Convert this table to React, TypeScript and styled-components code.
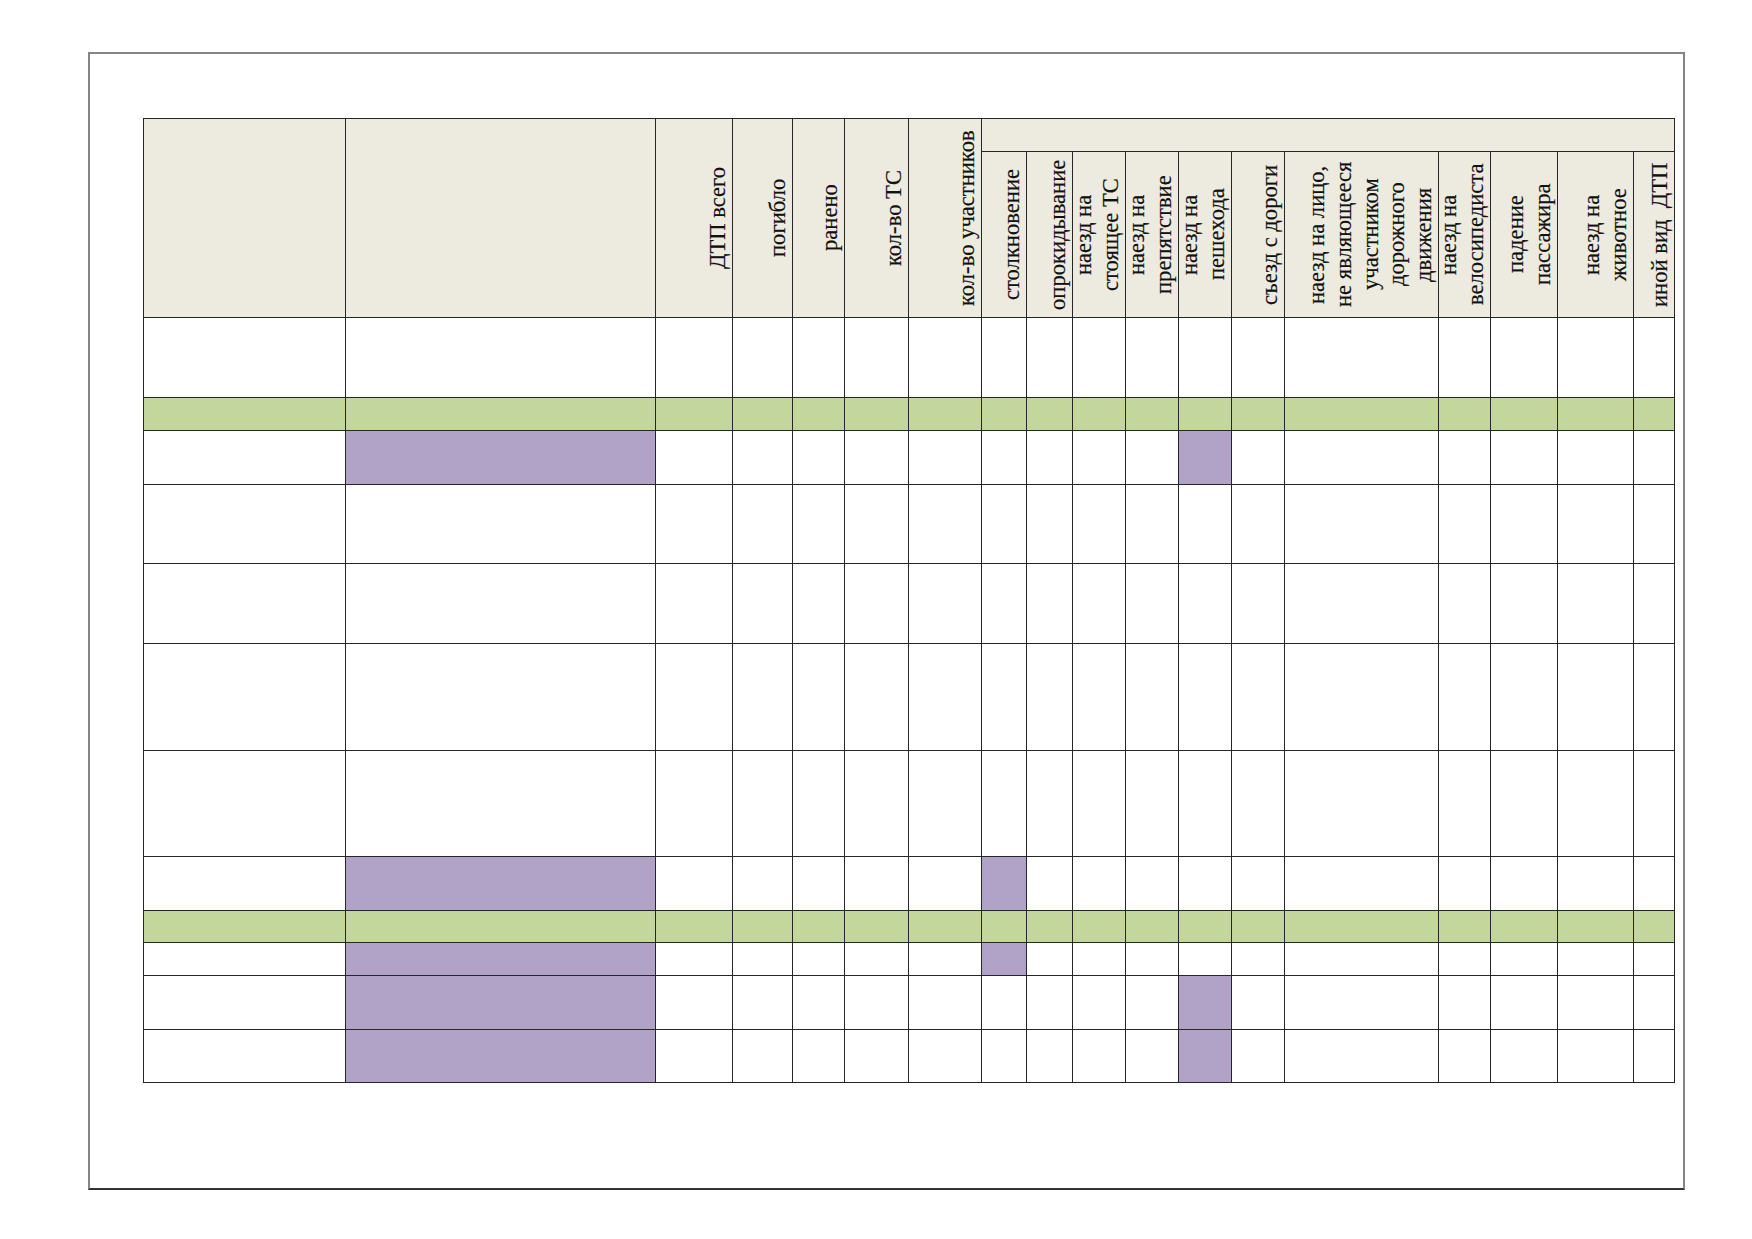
import React from "react";
import styled, { createGlobalStyle } from "styled-components";

const GlobalStyle = createGlobalStyle`
  html, body { margin: 0; padding: 0; background: #ffffff; }
  body { font-family: "Liberation Serif", "Times New Roman", serif; color: #111111; }
`;

type Tone = "head" | "white" | "green" | "purple";

const TONES: Record<Tone, string> = {
  head: "#EDEBE0",
  white: "#FFFFFF",
  green: "#C3D69B",
  purple: "#B1A2C7",
};

/* distances between vertical rules, left to right */
const COLS = [202, 310, 77, 60, 52, 64, 73, 45, 46, 53, 53, 53, 53, 154, 52, 67, 76, 41];

/* header: top band, rotated-label band */
const HEAD_ROWS = [33, 166];

interface BodyRow {
  h: number;
  green?: boolean;
  purple?: number[];
}

const BODY: BodyRow[] = [
  { h: 80 },
  { h: 33, green: true },
  { h: 54, purple: [1, 11] },
  { h: 79 },
  { h: 80 },
  { h: 107 },
  { h: 106 },
  { h: 54, purple: [1, 7] },
  { h: 32, green: true },
  { h: 33, purple: [1, 7] },
  { h: 54, purple: [1, 11] },
  { h: 53, purple: [1, 11] },
];

const MAIN_HEADS: string[][] = [
  [],
  [],
  ["ДТП всего"],
  ["погибло"],
  ["ранено"],
  ["кол-во ТС"],
  ["кол-во участников"],
];

const TYPE_HEADS: string[][] = [
  ["столкновение"],
  ["опрокидывание"],
  ["наезд на", "стоящее ТС"],
  ["наезд на", "препятствие"],
  ["наезд на", "пешехода"],
  ["съезд с дороги"],
  ["наезд на лицо,", "не являющееся", "участником", "дорожного", "движения"],
  ["наезд на", "велосипедиста"],
  ["падение", "пассажира"],
  ["наезд на", "животное"],
  ["иной вид\u00a0\u00a0ДТП"],
];

const Page = styled.div`
  box-sizing: border-box;
  min-height: 1239px;
  padding: 52px 0 0 88px;
`;

const Sheet = styled.div`
  box-sizing: border-box;
  width: 1597px;
  height: 1138px;
  border: 2px solid #848484;
  border-bottom-color: #333333;
  padding: 64px 0 0 53px;
`;

const Grid = styled.div<{ $cols: number[]; $rows: number[] }>`
  display: grid;
  width: max-content;
  grid-template-columns: ${(p) => p.$cols.map((w) => `${w - 1}px`).join(" ")};
  grid-template-rows: ${(p) => p.$rows.map((h) => `${h - 1}px`).join(" ")};
  gap: 1px;
  padding: 1px;
  background: #262626;
`;

const Cell = styled.div<{ $tone: Tone; $rowSpan?: number; $colSpan?: number }>`
  background: ${(p) => TONES[p.$tone]};
  grid-row: span ${(p) => p.$rowSpan ?? 1};
  grid-column: span ${(p) => p.$colSpan ?? 1};
  display: flex;
  justify-content: flex-end;
  align-items: stretch;
  min-width: 0;
  overflow: visible;
`;

const Label = styled.div`
  writing-mode: vertical-rl;
  transform: rotate(180deg);
  text-align: center;
  font-family: "Liberation Serif", "Times New Roman", serif;
  font-size: 22.6px;
  line-height: 26.8px;
  white-space: nowrap;
  color: #111111;
  -webkit-text-stroke: 0.2px #111111;
`;

function HeadLabel({ lines }: { lines: string[] }) {
  if (lines.length === 0) return null;
  return (
    <Label>
      {lines.map((l, i) => (
        <React.Fragment key={i}>
          {i > 0 && <br />}
          {l}
        </React.Fragment>
      ))}
    </Label>
  );
}

export default function App() {
  const rows = [...HEAD_ROWS, ...BODY.map((r) => r.h)];
  return (
    <Page>
      <GlobalStyle />
      <Sheet>
        <Grid $cols={COLS} $rows={rows}>
          {MAIN_HEADS.map((lines, i) => (
            <Cell key={`m${i}`} $tone="head" $rowSpan={2}>
              <HeadLabel lines={lines} />
            </Cell>
          ))}
          <Cell $tone="head" $colSpan={TYPE_HEADS.length} />
          {TYPE_HEADS.map((lines, i) => (
            <Cell key={`t${i}`} $tone="head">
              <HeadLabel lines={lines} />
            </Cell>
          ))}
          {BODY.map((row, r) =>
            COLS.map((_, c) => {
              const tone: Tone = row.green
                ? "green"
                : row.purple && row.purple.includes(c)
                ? "purple"
                : "white";
              return <Cell key={`r${r}c${c}`} $tone={tone} />;
            })
          )}
        </Grid>
      </Sheet>
    </Page>
  );
}
